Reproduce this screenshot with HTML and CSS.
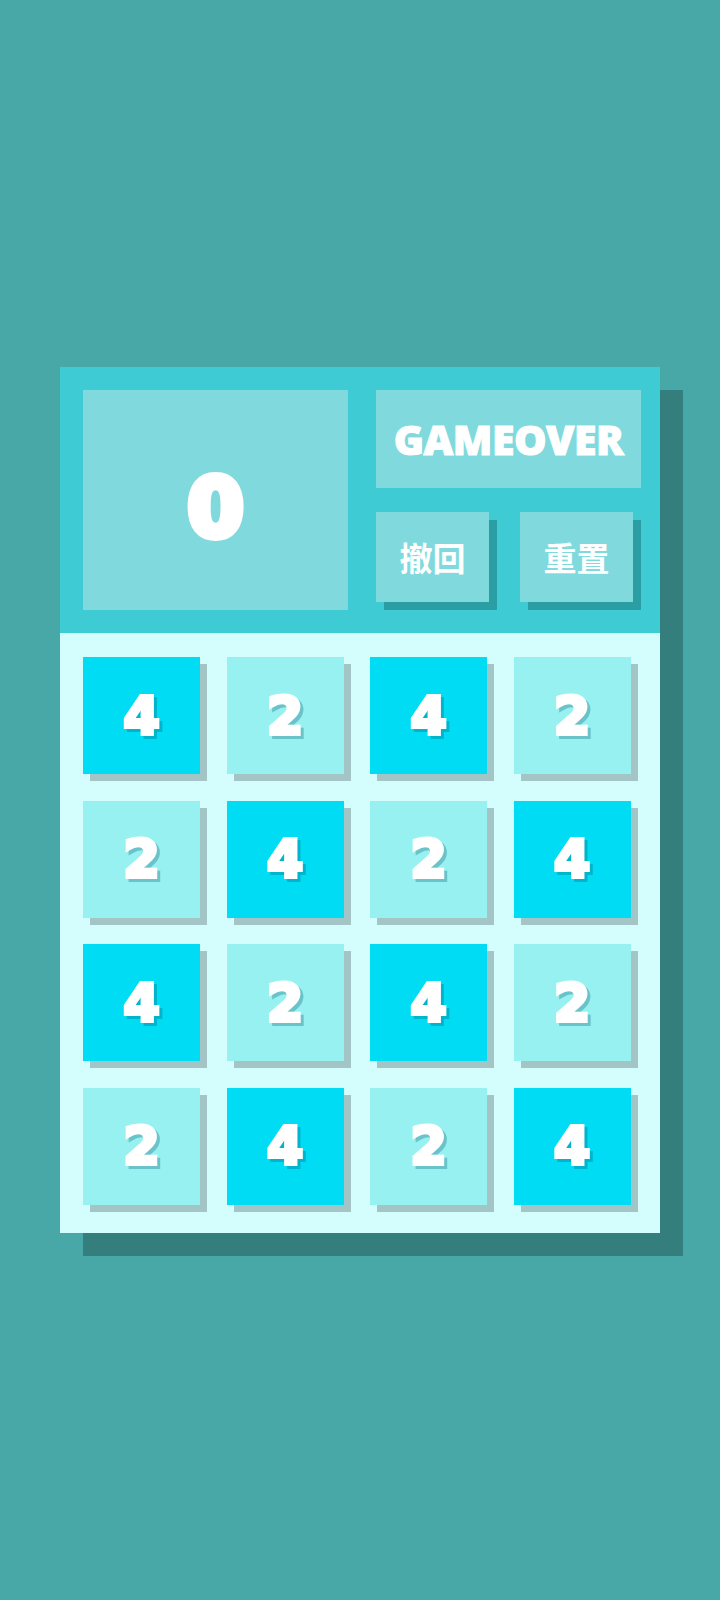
FILE: index.html
```html
<!DOCTYPE html>
<html lang="zh">
<head>
<meta charset="utf-8">
<title>2048</title>
<link rel="stylesheet" href="styles.css">
</head>
<body>
<div class="page">
  <div class="game">
    <div class="header">
      <div class="score"><span class="num">0</span></div>
      <div class="side">
        <div class="status">GAMEOVER</div>
        <div class="buttons">
          <div class="btn">撤回</div>
          <div class="btn">重置</div>
        </div>
      </div>
    </div>
    <div class="board">
      <div class="tile t4"><span class="digit">4</span></div>
      <div class="tile t2"><span class="digit">2</span></div>
      <div class="tile t4"><span class="digit">4</span></div>
      <div class="tile t2"><span class="digit">2</span></div>
      <div class="tile t2"><span class="digit">2</span></div>
      <div class="tile t4"><span class="digit">4</span></div>
      <div class="tile t2"><span class="digit">2</span></div>
      <div class="tile t4"><span class="digit">4</span></div>
      <div class="tile t4"><span class="digit">4</span></div>
      <div class="tile t2"><span class="digit">2</span></div>
      <div class="tile t4"><span class="digit">4</span></div>
      <div class="tile t2"><span class="digit">2</span></div>
      <div class="tile t2"><span class="digit">2</span></div>
      <div class="tile t4"><span class="digit">4</span></div>
      <div class="tile t2"><span class="digit">2</span></div>
      <div class="tile t4"><span class="digit">4</span></div>
    </div>
  </div>
</div>
</body>
</html>
```
FILE: styles.css
```css
html, body {
  margin: 0;
  padding: 0;
}
body {
  background: #48a8a8;
  font-family: "DejaVu Sans", "Noto Sans CJK SC", sans-serif;
}
.page {
  min-height: 1600px;
  display: flex;
  align-items: center;
  justify-content: center;
}
.game {
  width: 600px;
  box-shadow: 23px 23px 0 #357e7e;
}
.header {
  height: 266px;
  box-sizing: border-box;
  background: #3fcbd3;
  padding: 23px 19px 23px 23px;
  display: flex;
  gap: 28px;
}
.score {
  width: 265px;
  height: 220px;
  background: #80d9dc;
  display: flex;
  align-items: center;
  justify-content: center;
  padding-top: 18px;
  box-sizing: border-box;
}
.num {
  color: #fff;
  font-family: "DejaVu Sans", sans-serif;
  font-weight: 700;
  font-size: 80px;
  line-height: 1;
  -webkit-text-stroke: 8px #fff;
  letter-spacing: 0;
}
.side {
  width: 265px;
  display: flex;
  flex-direction: column;
  gap: 24px;
}
.status {
  height: 98px;
  background: #80d9dc;
  color: #fff;
  font-family: "Open Sans", sans-serif;
  font-weight: 800;
  font-size: 41px;
  -webkit-text-stroke: 1px #fff;
  display: flex;
  align-items: center;
  justify-content: center;
  letter-spacing: -0.5px;
}
.buttons {
  display: flex;
  gap: 31px;
}
.btn {
  width: 113px;
  height: 90px;
  background: #80d9dc;
  box-shadow: 8px 8px 0 #2b9ea4;
  color: #fff;
  font-family: "Noto Sans CJK SC", sans-serif;
  font-weight: 700;
  font-size: 33px;
  display: flex;
  align-items: center;
  justify-content: center;
}
.board {
  height: 600px;
  box-sizing: border-box;
  background: #d4fdfd;
  padding: 24px 0 0 23px;
  display: grid;
  grid-template-columns: repeat(4, 117px);
  grid-template-rows: repeat(4, 117px);
  gap: 26.5px;
}
.tile {
  box-shadow: 7px 7px 0 #a3c5c6;
  display: flex;
  align-items: center;
  justify-content: center;
}
.digit {
  color: #fff;
  font-family: "DejaVu Sans", sans-serif;
  font-weight: 700;
  font-size: 52px;
  line-height: 1;
  -webkit-text-stroke: 4px #fff;
  filter: drop-shadow(3px 3px 0 rgba(0, 90, 110, 0.3));
}
.t4 {
  background: #00dcf4;
}
.t2 {
  background: #98f1f1;
}
```
